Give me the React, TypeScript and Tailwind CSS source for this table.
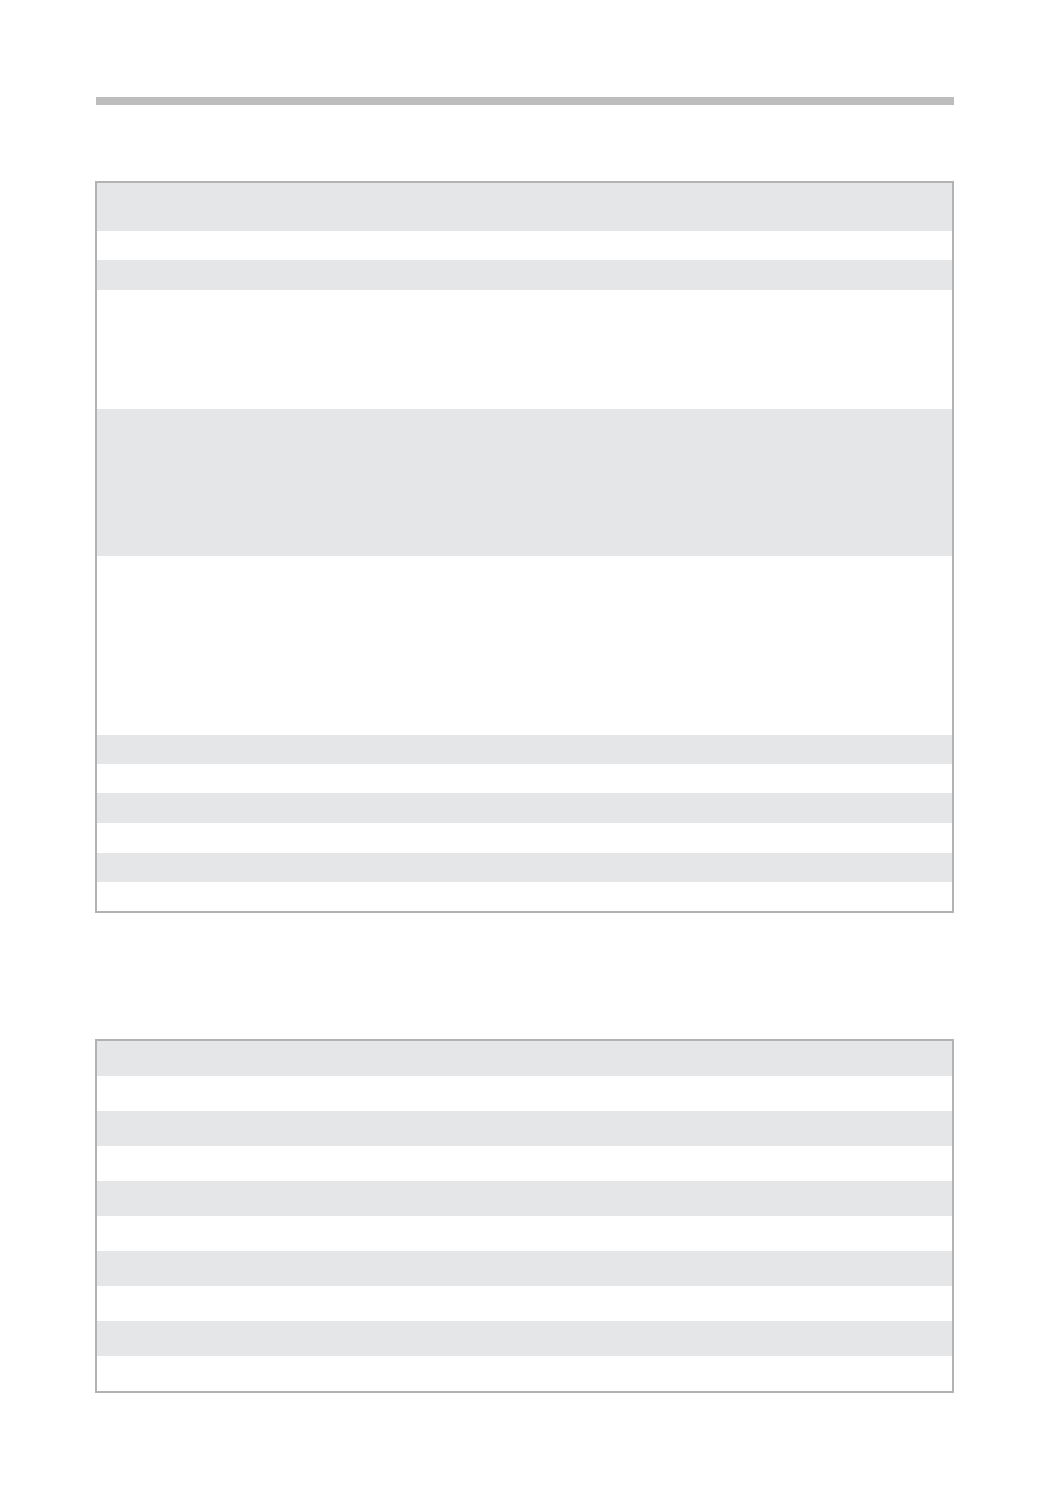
const firstRows = [
  "h-[48px]",
  "h-[29px]",
  "h-[30px]",
  "h-[119px]",
  "h-[147px]",
  "h-[179px]",
  "h-[29px]",
  "h-[29px]",
  "h-[30px]",
  "h-[30px]",
  "h-[29px]",
  "h-[29px]",
];

const secondRows = Array.from({ length: 10 }, (_, i) => i);

function Row({ height, striped }: { height: string; striped: boolean }) {
  return (
    <div className={`${height} w-full ${striped ? "bg-[#e5e6e8]" : "bg-white"}`} />
  );
}

export default function App() {
  return (
    <div className="min-h-screen bg-white pt-[97px] pb-[116px] font-['Liberation_Sans',sans-serif]">
      <div className="ml-[95px] w-[859px]">
        <div className="ml-px h-[8px] bg-[#bdbdbd]" />

        <div className="mt-[76px] flex flex-col border-2 border-[#b2b2b2]">
          {firstRows.map((h, i) => (
            <Row key={i} height={h} striped={i % 2 === 0} />
          ))}
        </div>

        <div className="mt-[126px] flex flex-col border-2 border-[#b2b2b2]">
          {secondRows.map((i) => (
            <Row key={i} height="h-[35px]" striped={i % 2 === 0} />
          ))}
        </div>
      </div>
    </div>
  );
}
